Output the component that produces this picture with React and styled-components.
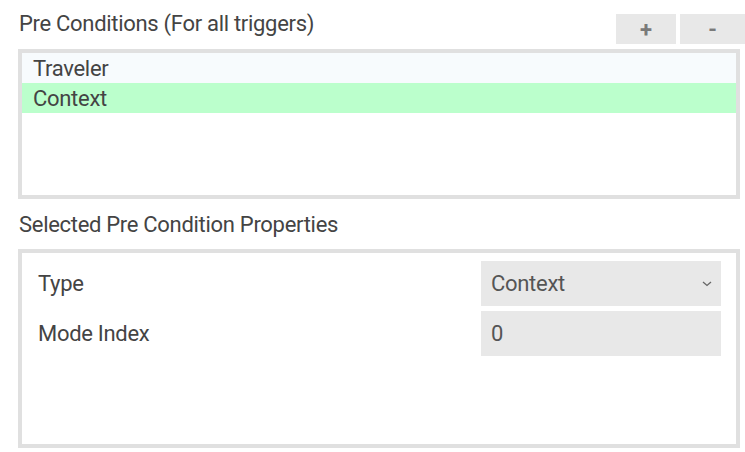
import React, { useState } from 'react';
import styled, { createGlobalStyle } from 'styled-components';

const GlobalStyle = createGlobalStyle`
  html, body {
    margin: 0;
    padding: 0;
    background: #ffffff;
  }
  body {
    font-family: Roboto, "Liberation Sans", sans-serif;
    color: #444444;
  }
`;

const Page = styled.div`
  width: 745px;
  height: 452px;
  padding: 0 5px 0 18px;
  box-sizing: border-box;
  display: flex;
  flex-direction: column;
  font-size: 22px;
  letter-spacing: -0.3px;
`;

const HeaderRow = styled.div`
  display: flex;
  align-items: flex-end;
  justify-content: space-between;
  height: 44px;
  margin-right: -5px;
  padding-bottom: 5px;
`;

const SectionTitle = styled.h2`
  margin: 0;
  padding-left: 1px;
  font-size: 22px;
  font-weight: 400;
  color: #444;
  line-height: 24px;
  align-self: ${props => (props.top ? 'flex-start' : 'auto')};
  padding-top: ${props => (props.top ? '12px' : '0')};
`;

const ButtonGroup = styled.div`
  display: flex;
  gap: 4px;
  align-self: flex-end;
`;

const SmallButton = styled.button`
  width: ${props => props.w}px;
  height: 30px;
  border: none;
  background: #e8e8e8;
  color: #7a7a7a;
  font-family: Roboto, "Liberation Sans", sans-serif;
  font-size: 22px;
  font-weight: 700;
  padding: 0;
  display: flex;
  align-items: center;
  justify-content: center;
`;

const Box = styled.div`
  border: 4px solid #e0e0e0;
  height: ${props => props.h}px;
  box-sizing: border-box;
  background: #fff;
`;

const ListRow = styled.div`
  height: 30px;
  padding-left: 11px;
  display: flex;
  align-items: center;
  color: #444;
  background: ${props => (props.selected ? '#bbffcc' : '#f7fbfd')};
`;

const SubTitleRow = styled.div`
  height: 50px;
  display: flex;
  align-items: center;
  padding-top: 2px;
  box-sizing: border-box;
`;

const PropsBody = styled.div`
  padding: 8px 15px 0 16px;
  display: flex;
  flex-direction: column;
  gap: 5px;
`;

const PropRow = styled.div`
  display: flex;
  align-items: center;
  justify-content: space-between;
  height: 45px;
`;

const PropLabel = styled.span`
  color: #444;
`;

const Field = styled.div`
  width: 240px;
  height: 45px;
  box-sizing: border-box;
  background: #e8e8e8;
  padding: 0 9px 0 10px;
  display: flex;
  align-items: center;
  justify-content: space-between;
  color: #555;
`;

const Chevron = () => (
  <svg width="10" height="6" viewBox="0 0 10 6">
    <path d="M1 1 L5 4.5 L9 1" fill="none" stroke="#666" strokeWidth="1.3" />
  </svg>
);

export default function App() {
  const [selected, setSelected] = useState('Context');
  const conditions = ['Traveler', 'Context'];

  return (
    <Page>
      <GlobalStyle />
      <HeaderRow>
        <SectionTitle top>Pre Conditions (For all triggers)</SectionTitle>
        <ButtonGroup>
          <SmallButton w={60}>+</SmallButton>
          <SmallButton w={65}>-</SmallButton>
        </ButtonGroup>
      </HeaderRow>
      <Box h={150}>
        {conditions.map(name => (
          <ListRow
            key={name}
            selected={name === selected}
            onClick={() => setSelected(name)}
          >
            {name}
          </ListRow>
        ))}
      </Box>
      <SubTitleRow>
        <SectionTitle>Selected Pre Condition Properties</SectionTitle>
      </SubTitleRow>
      <Box h={199}>
        <PropsBody>
          <PropRow>
            <PropLabel>Type</PropLabel>
            <Field>
              {selected}
              <Chevron />
            </Field>
          </PropRow>
          <PropRow>
            <PropLabel>Mode Index</PropLabel>
            <Field>0</Field>
          </PropRow>
        </PropsBody>
      </Box>
    </Page>
  );
}
